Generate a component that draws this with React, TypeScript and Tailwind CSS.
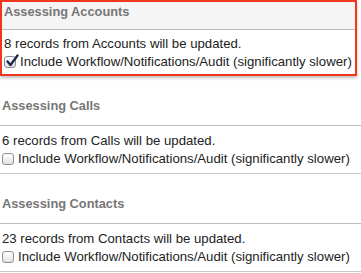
import React from "react";

interface Module {
  name: string;
  count: number;
  checked: boolean;
  active?: boolean;
}

const modules: Module[] = [
  { name: "Accounts", count: 8, checked: true, active: true },
  { name: "Calls", count: 6, checked: false },
  { name: "Contacts", count: 23, checked: false },
];

const Check = ({ checked }: { checked: boolean }) => (
  <span className="relative mr-[4px] inline-block h-[12px] w-[12px] shrink-0 rounded-[3px] border border-[#8f8f8f] bg-gradient-to-b from-[#ffffff] to-[#e2e2e2]">
    {checked && (
      <svg
        viewBox="0 0 14 14"
        className="absolute left-[0px] top-[-3px] h-[14px] w-[14px]"
      >
        <path
          d="M2.5 7.5 L5.5 11 L12.5 1.5"
          fill="none"
          stroke="#1d2a52"
          strokeWidth="2.4"
          strokeLinecap="round"
          strokeLinejoin="round"
        />
      </svg>
    )}
  </span>
);

const Section = ({ m }: { m: Module }) => (
  <div
    className={
      m.active
        ? "mr-[4px] border-2 border-[#f3361f] shadow-[0_2px_3px_rgba(0,0,0,0.25)]"
        : "mt-[21px] border-b border-[#c8c8c8]"
    }
  >
    <div
      className={`border-b border-[#bdbdbd] pl-[2px] text-[12.8px] font-bold leading-[18px] text-[#767676] ${
        m.active ? "bg-[#f5f5f5] pb-[8px] pt-[1px]" : "pb-[10px] pt-0"
      }`}
    >
      Assessing {m.name}
    </div>
    <div
      className={`pl-[2px] text-[13.2px] leading-[18px] text-[#222222] ${
        m.active ? "pb-[3px] pt-[5px]" : "pb-[5px] pt-[6px]"
      }`}
    >
      <div>
        {m.count} records from {m.name} will be updated.
      </div>
      <div className="flex items-center">
        <Check checked={m.checked} />
        <span>Include Workflow/Notifications/Audit (significantly slower)</span>
      </div>
    </div>
  </div>
);

export default function App() {
  return (
    <div className="h-[273px] w-[361px] overflow-hidden bg-white font-['Liberation_Sans',Arial,sans-serif]">
      {modules.map((m) => (
        <Section key={m.name} m={m} />
      ))}
    </div>
  );
}
